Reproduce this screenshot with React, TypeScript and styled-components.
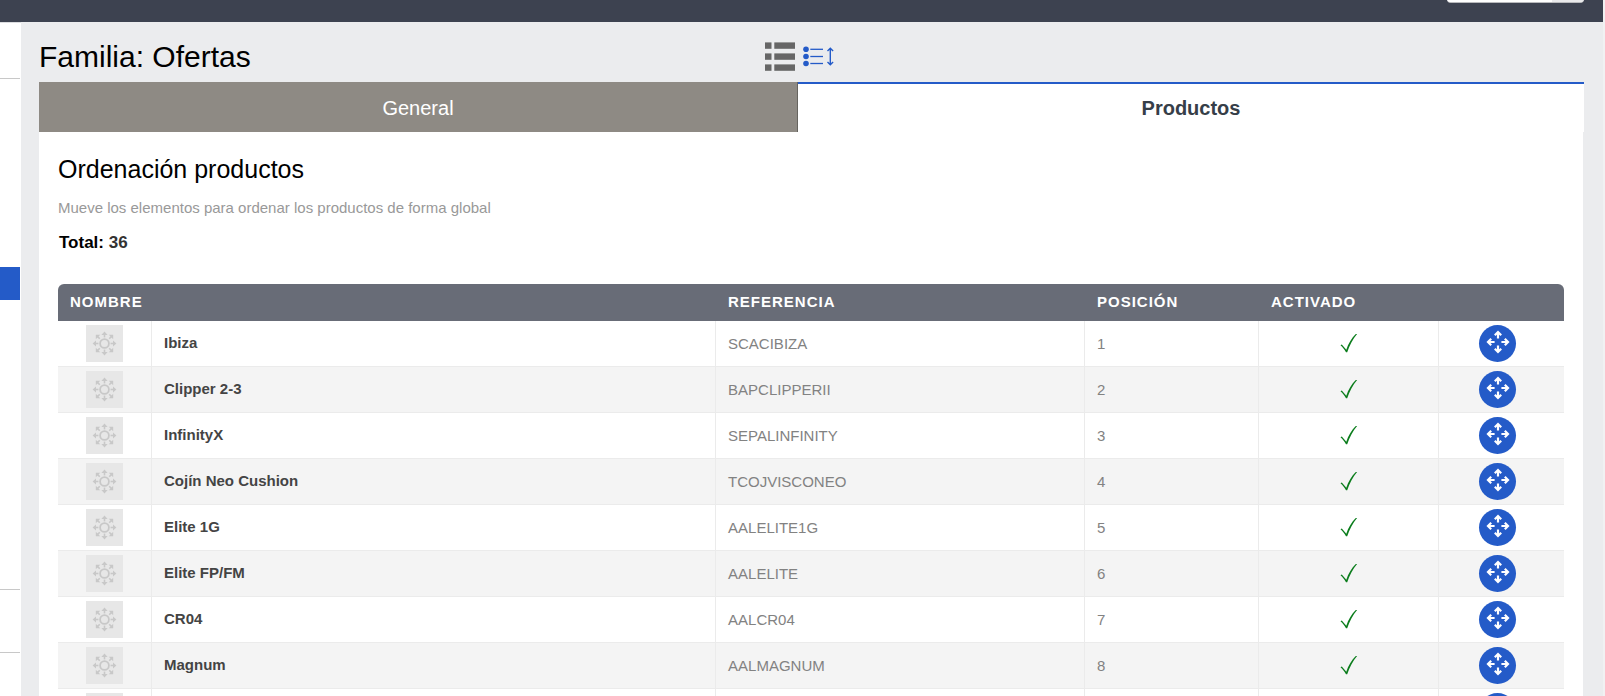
import React from "react";
import styled, { createGlobalStyle } from "styled-components";

const blue = "#245bc8";

const GlobalStyle = createGlobalStyle`
  *, *::before, *::after { box-sizing: border-box; }
  body {
    margin: 0;
    background: #ebecee;
    color: #000;
    font-family: "Liberation Sans", Arial, sans-serif;
    font-size: 15px;
  }
`;

const Shell = styled.div`
  display: flex;
  flex-direction: column;
  height: 100vh;
  overflow: hidden;
  border-right: 2px solid #f1f1f2;
`;

const TopBar = styled.header`
  flex: none;
  display: flex;
  justify-content: flex-end;
  align-items: flex-start;
  height: 22px;
  padding-right: 19px;
  overflow: hidden;
  background: #3d4250;
`;

const SearchForm = styled.form`
  display: flex;
  width: 137px;
  height: 28px;
  margin-top: -25px;
  border-bottom: 1px solid #b9babd;
  border-radius: 4px;
  overflow: hidden;
  background: #fff;
`;

const SearchInput = styled.input`
  flex: 1;
  min-width: 0;
  border: 0;
  background: #fff;
`;

const SearchButton = styled.button`
  width: 32px;
  border: 0;
  background: #e9e9eb;
`;

const Body = styled.div`
  flex: 1;
  min-height: 0;
  display: flex;
`;

const Sidebar = styled.nav`
  flex: none;
  width: 21px;
  padding-right: 1px;
  border-top: 1px solid #dcdde0;
  background: #fff;
`;

const MenuGroup = styled.div<{ $height: number }>`
  height: ${(p) => p.$height}px;
  border-bottom: 1px solid #c8c8c8;
`;

const MenuSpacer = styled.div`
  height: 188px;
`;

const MenuLink = styled.a`
  display: block;
  height: 33px;
  background: ${blue};
`;

const Main = styled.main`
  flex: 1;
  min-width: 0;
  padding: 0 19px 0 18px;
`;

const TitleRow = styled.div`
  display: grid;
  grid-template-columns: 47% 1fr;
  align-items: center;
  height: 60px;
  padding-top: 10px;
`;

const Title = styled.h1`
  margin: 0;
  font-size: 30px;
  line-height: 36px;
  font-weight: 400;
`;

const ViewIcons = styled.div`
  display: flex;
  align-items: center;
  gap: 7px;
  padding-bottom: 2px;
`;

const IconButton = styled.button`
  display: flex;
  padding: 0;
  border: 0;
  background: none;
`;

const Tabs = styled.div`
  display: grid;
  grid-template-columns: 759fr 786fr;
`;

const Tab = styled.button<{ $active?: boolean }>`
  height: 50px;
  padding: ${(p) => (p.$active ? "0" : "2px 0 0")};
  border: 0 solid;
  border-width: ${(p) => (p.$active ? "2px 0 0" : "0 1px 0 0")};
  border-color: ${(p) => (p.$active ? blue : "#66645f")};
  background: ${(p) => (p.$active ? "#fff" : "#8e8a84")};
  color: ${(p) => (p.$active ? "#363e48" : "#fff")};
  font-family: inherit;
  font-size: 20px;
  font-weight: ${(p) => (p.$active ? 700 : 400)};
`;

const Panel = styled.section`
  margin-right: 1px;
  padding: 23px 19px;
  background: #fff;
`;

const Heading = styled.h2`
  margin: 0;
  font-size: 25px;
  line-height: 28px;
  font-weight: 400;
`;

const Hint = styled.p`
  margin: 15px 0 0;
  color: #999;
  line-height: 20px;
`;

const Total = styled.p`
  margin: 15px 0 31px;
  padding-left: 1px;
  font-size: 17px;
  line-height: 20px;
  font-weight: 700;
`;

const TotalCount = styled.span`
  color: #333;
`;

const Table = styled.table`
  width: 100%;
  table-layout: fixed;
  border-collapse: separate;
  border-spacing: 0;
`;

const Th = styled.th`
  height: 37px;
  padding: 0 12px 2px;
  background: #686c77;
  color: #fff;
  font-size: 15px;
  line-height: 20px;
  letter-spacing: 1px;
  text-align: left;

  &:first-child { border-top-left-radius: 6px; }
  &:last-child { border-top-right-radius: 6px; }
`;

const Row = styled.tr`
  &:nth-child(even) { background: #f4f4f4; }
`;

const Td = styled.td`
  height: 46px;
  padding: 0 12px;
  border-right: 1px solid #ebebeb;
  border-bottom: 1px solid #ebebeb;
  color: #828282;
  line-height: 20px;

  &:last-child { border-right: 0; }
`;

const NameTd = styled(Td)`
  padding-bottom: 2px;
  color: #444;
  font-weight: 700;
`;

const IconTd = styled(Td)`
  padding: 4px 0;
  line-height: 0;
  text-align: center;
`;

const MoveTd = styled(IconTd)`
  padding-right: 8px;
`;

const MoveButton = styled.button`
  display: inline-flex;
  align-items: center;
  justify-content: center;
  width: 37px;
  height: 37px;
  padding: 0 0 3px 1px;
  border: 0;
  border-radius: 50%;
  background: ${blue};
  cursor: move;
`;

const ListIcon = () => (
  <svg width="30" height="29" viewBox="0 0 30 29" fill="#666">
    {[0.4, 11.4, 22.4].map((y) => (
      <g key={y}>
        <rect x="0" y={y} width="6.5" height="6.4" />
        <rect x="9.3" y={y} width="20.7" height="6.4" />
      </g>
    ))}
  </svg>
);

const SortIcon = () => (
  <svg width="32" height="22" viewBox="0 0 32 22" fill="none" stroke={blue}>
    {[4.3, 11.5, 18.5].map((y) => (
      <g key={y}>
        <circle cx="4" cy={y} r="2.8" fill={blue} stroke="none" />
        <path d={`M8.3 ${y}H21`} strokeWidth="1.3" />
      </g>
    ))}
    <path d="M28.3 3.6V19.4M25.5 6L28.3 3.3L31.1 6M25.5 17L28.3 19.7L31.1 17" strokeWidth="1.4" />
  </svg>
);

const Thumb = () => (
  <svg width="37" height="37" viewBox="0 0 37 37" fill="none" stroke="#c8c8c8" strokeWidth="1.6">
    <rect width="37" height="37" fill="#e7e7e7" stroke="none" />
    <circle cx="18.5" cy="18.5" r="4.4" strokeWidth="1.8" />
    {[0, 90, 180, 270].map((a) => (
      <g key={a} transform={`rotate(${a} 18.5 18.5)`}>
        <path d="M18.5 12.4V9" />
        <path d="M15.4 10L18.5 6.6L21.6 10Z" fill="#c8c8c8" stroke="none" />
        <path d="M23.2 13.8L25.6 11.4" />
        <path d="M22.8 9.8H27.2V14.2Z" fill="#c8c8c8" stroke="none" />
      </g>
    ))}
  </svg>
);

const CheckIcon = () => (
  <svg width="18" height="20" viewBox="0 0 18 20" role="img" aria-label="Activado">
    <path
      d="M0.5 11.3L1.8 10.4L6.3 15.8C8.2 9.8 11.6 4 15.8 0H17.1C12.8 5.2 9.5 11.4 7.2 18.2H6C4.5 15.4 2.7 13.3 0.5 11.3Z"
      fill="#0b7d1c"
    />
  </svg>
);

const MoveIcon = () => (
  <svg width="24" height="24" viewBox="0 0 24 24" fill="none" stroke="#fff" strokeWidth="2.2">
    {[0, 90, 180, 270].map((a) => (
      <path key={a} transform={`rotate(${a} 12 12)`} d="M12 8.6V2M8.8 5.2L12 2L15.2 5.2" />
    ))}
  </svg>
);

const products: [string, string, string][] = [
  ["Ibiza", "SCACIBIZA", "1"],
  ["Clipper 2-3", "BAPCLIPPERII", "2"],
  ["InfinityX", "SEPALINFINITY", "3"],
  ["Cojín Neo Cushion", "TCOJVISCONEO", "4"],
  ["Elite 1G", "AALELITE1G", "5"],
  ["Elite FP/FM", "AALELITE", "6"],
  ["CR04", "AALCR04", "7"],
  ["Magnum", "AALMAGNUM", "8"],
  ["", "", ""],
];

export default function App() {
  return (
    <>
      <GlobalStyle />
      <Shell>
        <TopBar>
          <SearchForm>
            <SearchInput type="search" aria-label="Buscar" />
            <SearchButton type="button" aria-label="Buscar" />
          </SearchForm>
        </TopBar>
        <Body>
          <Sidebar>
            <MenuGroup $height={56} />
            <MenuSpacer />
            <MenuLink href="#" aria-label="Familias" />
            <MenuGroup $height={290} />
            <MenuGroup $height={63} />
          </Sidebar>
          <Main>
            <TitleRow>
              <Title>Familia: Ofertas</Title>
              <ViewIcons>
                <IconButton type="button" aria-label="Listado"><ListIcon /></IconButton>
                <IconButton type="button" aria-label="Ordenar"><SortIcon /></IconButton>
              </ViewIcons>
            </TitleRow>
            <Tabs role="tablist">
              <Tab role="tab" aria-selected={false}>General</Tab>
              <Tab role="tab" aria-selected $active>Productos</Tab>
            </Tabs>
            <Panel>
              <Heading>Ordenación productos</Heading>
              <Hint>Mueve los elementos para ordenar los productos de forma global</Hint>
              <Total>Total: <TotalCount>36</TotalCount></Total>
              <Table>
                <colgroup>
                  <col style={{ width: 94 }} />
                  <col />
                  <col style={{ width: "24.5%" }} />
                  <col style={{ width: 174 }} />
                  <col style={{ width: 180 }} />
                  <col style={{ width: 125 }} />
                </colgroup>
                <thead>
                  <tr>
                    <Th colSpan={2}>NOMBRE</Th>
                    <Th>REFERENCIA</Th>
                    <Th>POSICIÓN</Th>
                    <Th>ACTIVADO</Th>
                    <Th />
                  </tr>
                </thead>
                <tbody>
                  {products.map(([name, reference, position], i) => (
                    <Row key={i}>
                      <IconTd><Thumb /></IconTd>
                      <NameTd>{name}</NameTd>
                      <Td>{reference}</Td>
                      <Td>{position}</Td>
                      <IconTd><CheckIcon /></IconTd>
                      <MoveTd>
                        <MoveButton type="button" aria-label="Mover"><MoveIcon /></MoveButton>
                      </MoveTd>
                    </Row>
                  ))}
                </tbody>
              </Table>
            </Panel>
          </Main>
        </Body>
      </Shell>
    </>
  );
}
